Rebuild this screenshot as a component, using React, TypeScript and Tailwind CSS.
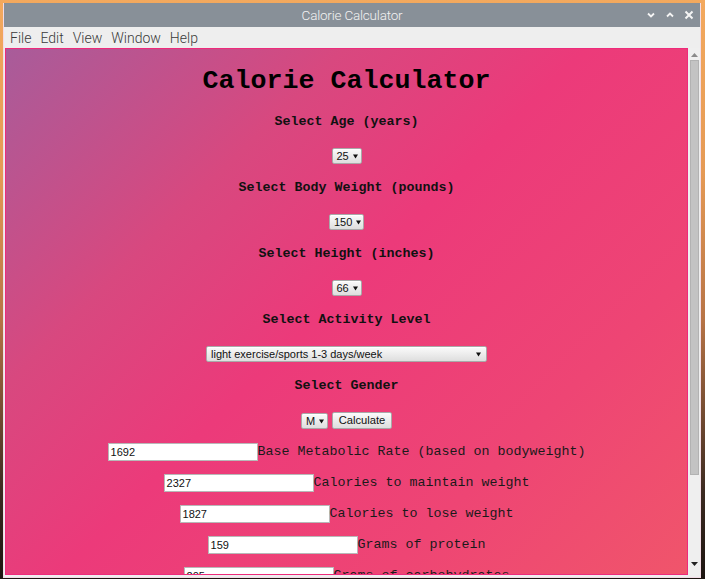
import React from "react";

const Arrow = () => (
  <svg width="5" height="5" viewBox="0 0 5 5" className="shrink-0">
    <path d="M0 0.5 H5 L2.5 4.5 Z" fill="#111" />
  </svg>
);

function FakeSelect({ value, w }: { value: string; w: string }) {
  return (
    <div
      className={`${w} h-[16px] flex items-center justify-between gap-[4px] pl-[4px] pr-[5px] border border-[#a9a9a9] rounded-[2px] bg-[linear-gradient(#fbfbfb,#dedede)] font-['Liberation_Sans',Arial,sans-serif] text-[11px] leading-none text-[#111] shadow-[inset_0_1px_0_#ffffff]`}
    >
      <span>{value}</span>
      <Arrow />
    </div>
  );
}

function H4({ children }: { children: React.ReactNode }) {
  return (
    <div className="h-[16px] leading-[16px] font-bold text-[13.33px] text-[#111]">{children}</div>
  );
}

function OutRow({ value, label }: { value: string; label: string }) {
  return (
    <div className="h-[18px] flex items-center justify-center">
      <div className="w-[150px] h-[18px] bg-white border border-[#b8b8b8] flex items-center pl-[2px] font-['Liberation_Sans',Arial,sans-serif] text-[11px] text-[#111]">
        {value}
      </div>
      <span className="text-[13.33px] leading-[16px] text-[#1a1a1a] whitespace-pre">{label}</span>
    </div>
  );
}

export default function App() {
  return (
    <div className="w-[705px] h-[579px] overflow-hidden bg-[linear-gradient(to_bottom,#f3a95e_0%,#e59a55_30%,#b87446_55%,#3c2a21_85%,#1c1410_100%)] pt-[3px] pl-[3px] pr-[4px] pb-[1px]">
      <div className="w-[698px] h-[575px] flex flex-col bg-[#eeeeee] border-l border-r border-b border-[#f2dbe6]">
        {/* Title bar */}
        <div className="h-[24px] shrink-0 bg-[#889098] relative flex items-center justify-center">
          <span className="font-['Roboto',sans-serif] text-[13.5px] tracking-[-0.2px] text-[#f2f2f2] font-light">
            Calorie Calculator
          </span>
          <div className="absolute right-[6px] top-0 h-[24px] flex items-center gap-[9px]">
            <svg width="10" height="8" viewBox="0 0 10 8">
              <path d="M2 2.5 L5 5.5 L8 2.5" stroke="#f4f4f4" strokeWidth="1.8" fill="none" />
            </svg>
            <svg width="10" height="8" viewBox="0 0 10 8">
              <path d="M2 5.5 L5 2.5 L8 5.5" stroke="#f4f4f4" strokeWidth="1.8" fill="none" />
            </svg>
            <svg width="10" height="10" viewBox="0 0 10 10">
              <path d="M1.5 1.5 L8.5 8.5 M8.5 1.5 L1.5 8.5" stroke="#f4f4f4" strokeWidth="2" fill="none" />
            </svg>
          </div>
        </div>
        {/* Menu bar */}
        <div className="h-[21px] shrink-0 bg-[#eeeeee] flex items-center pt-[1px] pl-[6px] gap-[9px] font-['Roboto',sans-serif] text-[14px] text-[#3a3a3a] font-light">
          <span>File</span>
          <span>Edit</span>
          <span>View</span>
          <span>Window</span>
          <span>Help</span>
        </div>
        {/* Body */}
        <div className="flex-1 flex min-h-0">
          <div className="w-[684px] h-[527px] ml-[1px] border border-[#ee2a7b] overflow-hidden bg-[linear-gradient(135deg,#a85c9a_0%,#d8487f_28%,#ec3a7a_48%,#ee4574_75%,#f0556b_100%)] font-['Liberation_Mono',monospace] text-center flex flex-col items-center pt-[16px]">
            <div className="h-[32px] leading-[32px] font-bold text-[26.67px] text-black">Calorie Calculator</div>

            <div className="mt-[17px]"><H4>Select Age (years)</H4></div>
            <div className="mt-[18px]"><FakeSelect value="25" w="w-[30px]" /></div>

            <div className="mt-[16px]"><H4>Select Body Weight (pounds)</H4></div>
            <div className="mt-[18px]"><FakeSelect value="150" w="w-[35px]" /></div>

            <div className="mt-[16px]"><H4>Select Height (inches)</H4></div>
            <div className="mt-[18px]"><FakeSelect value="66" w="w-[30px]" /></div>

            <div className="mt-[16px]"><H4>Select Activity Level</H4></div>
            <div className="mt-[18px]"><FakeSelect value="light exercise/sports 1-3 days/week" w="w-[281px]" /></div>

            <div className="mt-[16px]"><H4>Select Gender</H4></div>
            <div className="mt-[18px] flex items-start gap-[4px]">
              <div className="mt-[1px]"><FakeSelect value="M" w="w-[27px]" /></div>
              <div className="w-[60px] h-[17px] flex items-center justify-center border border-[#a9a9a9] rounded-[2px] bg-[linear-gradient(#fbfbfb,#dedede)] font-['Liberation_Sans',Arial,sans-serif] text-[11.2px] leading-none text-[#111]">
                Calculate
              </div>
            </div>

            <div className="mt-[14px] flex flex-col gap-[13px] w-full">
              <OutRow value="1692" label="Base Metabolic Rate (based on bodyweight)" />
              <OutRow value="2327" label="Calories to maintain weight" />
              <OutRow value="1827" label="Calories to lose weight" />
              <OutRow value="159" label="Grams of protein" />
              <OutRow value="205" label="Grams of carbohydrates" />
            </div>
          </div>
          {/* Scrollbar */}
          <div className="w-[12px] h-[527px] bg-[#efefef] flex flex-col items-center">
            <div className="h-[10px] flex items-end pb-[1px]">
              <svg width="7" height="4" viewBox="0 0 7 4">
                <path d="M0 4 H7 L3.5 0 Z" fill="#8a8a8a" />
              </svg>
            </div>
            <div className="mt-[2px] w-[9px] h-[415px] bg-[#c3c3c3] border border-[#b2b2b2]" />
            <div className="flex-1" />
            <div className="h-[14px] flex items-start pt-[1px]">
              <svg width="7" height="4" viewBox="0 0 7 4">
                <path d="M0 0 H7 L3.5 4 Z" fill="#222" />
              </svg>
            </div>
          </div>
        </div>
      </div>
    </div>
  );
}
